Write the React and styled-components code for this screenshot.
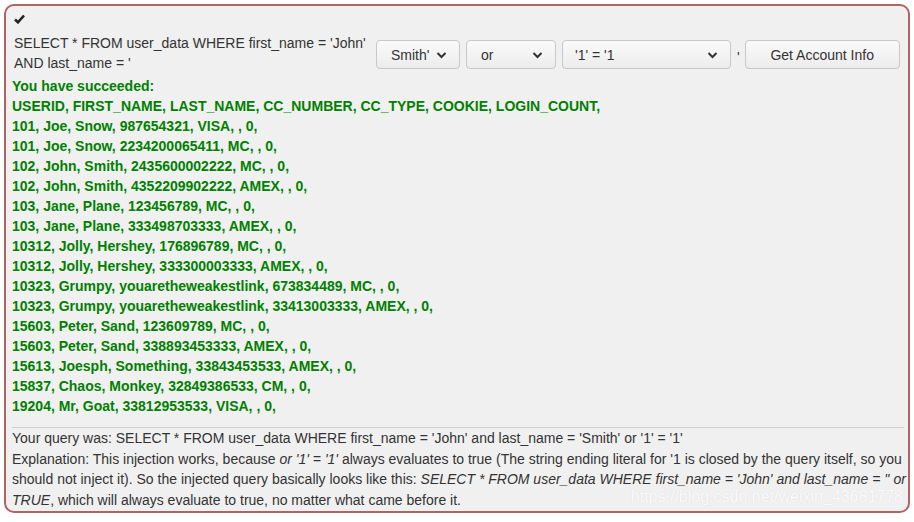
import React from 'react';
import styled, { createGlobalStyle } from 'styled-components';

const GlobalStyle = createGlobalStyle`
    body {
        margin: 0;
        background: #ffffff;
        font-family: "Liberation Sans", Arial, sans-serif;
    }
`;

const Page = styled.div`
    padding: 4px;
`;

const Panel = styled.div`
    position: relative;
    border: 2px solid #b06363;
    border-radius: 10px;
    background: #f0f0f0;
    padding: 5px 2px 7px 6px;
    height: 509px;
    box-sizing: border-box;
    font-size: 14px;
    color: #333;
`;

const CheckRow = styled.div`
    height: 16px;
    display: flex;
    align-items: center;
    padding-left: 2px;
`;

const QueryRow = styled.div`
    display: flex;
    align-items: center;
    margin-top: 6px;
`;

const QueryText = styled.div`
    width: 360px;
    line-height: 20px;
    padding-left: 2px;
`;

const Select = styled.div`
    display: flex;
    align-items: center;
    justify-content: space-between;
    box-sizing: border-box;
    width: ${(p) => p.w}px;
    height: 29px;
    margin: 3px 0 0 ${(p) => p.ml || 6}px;
    padding: 0 12px 0 ${(p) => p.pl || 12}px;
    border: 1px solid #c8c8c8;
    border-radius: 4px;
    background: linear-gradient(#fafafa, #ececec);
    color: #333;
`;

const Quote = styled.span`
    margin: 8px 5px 0 6px;
    line-height: 20px;
`;

const Button = styled.div`
    box-sizing: border-box;
    width: 155px;
    height: 29px;
    margin-top: 3px;
    display: flex;
    align-items: center;
    justify-content: center;
    border: 1px solid #c8c8c8;
    border-radius: 4px;
    background: linear-gradient(#fafafa, #ececec);
    color: #333;
`;

const Result = styled.div`
    margin-top: 3px;
    color: #008000;
    font-weight: bold;
    line-height: 20px;
`;

const Divider = styled.hr`
    border: 0;
    border-top: 1px solid #cfcfcf;
    margin: 11px 2px 0 0;
`;

const Feedback = styled.div`
    line-height: 20.6px;
`;

const Watermark = styled.div`
    position: absolute;
    right: 5px;
    bottom: 5px;
    font-size: 16px;
    color: #fafafa;
    text-shadow: 0 0 1px #d8d8d8;
`;

const Chevron = () => (
    <svg width="11" height="8" viewBox="0 0 11 8">
        <path d="M1.5 2 L5.5 6 L9.5 2" fill="none" stroke="#333" strokeWidth="2" />
    </svg>
);

const Check = () => (
    <svg width="11" height="10" viewBox="0 0 11 10">
        <path d="M1 5.5 L4 8.3 L10 1.5" fill="none" stroke="#222" strokeWidth="2.6" />
    </svg>
);

const rows = [
    'You have succeeded:',
    'USERID, FIRST_NAME, LAST_NAME, CC_NUMBER, CC_TYPE, COOKIE, LOGIN_COUNT,',
    '101, Joe, Snow, 987654321, VISA, , 0,',
    '101, Joe, Snow, 2234200065411, MC, , 0,',
    '102, John, Smith, 2435600002222, MC, , 0,',
    '102, John, Smith, 4352209902222, AMEX, , 0,',
    '103, Jane, Plane, 123456789, MC, , 0,',
    '103, Jane, Plane, 333498703333, AMEX, , 0,',
    '10312, Jolly, Hershey, 176896789, MC, , 0,',
    '10312, Jolly, Hershey, 333300003333, AMEX, , 0,',
    '10323, Grumpy, youaretheweakestlink, 673834489, MC, , 0,',
    '10323, Grumpy, youaretheweakestlink, 33413003333, AMEX, , 0,',
    '15603, Peter, Sand, 123609789, MC, , 0,',
    '15603, Peter, Sand, 338893453333, AMEX, , 0,',
    '15613, Joesph, Something, 33843453533, AMEX, , 0,',
    '15837, Chaos, Monkey, 32849386533, CM, , 0,',
    '19204, Mr, Goat, 33812953533, VISA, , 0,',
];

const App = () => {
    return (
        <Page>
            <GlobalStyle />
            <Panel>
                <CheckRow>
                    <Check />
                </CheckRow>
                <QueryRow>
                    <QueryText>
                        SELECT * FROM user_data WHERE first_name = 'John' AND last_name = '
                    </QueryText>
                    <Select w={84} ml={2} pl={14}>
                        Smith' <Chevron />
                    </Select>
                    <Select w={90} pl={14}>
                        or <Chevron />
                    </Select>
                    <Select w={169}>
                        '1' = '1 <Chevron />
                    </Select>
                    <Quote>'</Quote>
                    <Button>Get Account Info</Button>
                </QueryRow>
                <Result>
                    {rows.map((r) => (
                        <div key={r}>{r}</div>
                    ))}
                </Result>
                <Divider />
                <Feedback>
                    Your query was: SELECT * FROM user_data WHERE first_name = 'John' and
                    last_name = 'Smith' or '1' = '1'
                    <br />
                    Explanation: This injection works, because <i>or '1' = '1'</i> always
                    evaluates to true (The string ending literal for '1 is closed by the query
                    itself, so you should not inject it). So the injected query basically looks
                    like this: <i>SELECT * FROM user_data WHERE first_name = 'John' and
                    last_name = '' or TRUE</i>, which will always evaluate to true, no matter
                    what came before it.
                </Feedback>
                <Watermark>https://blog.csdn.net/weixin_43681778</Watermark>
            </Panel>
        </Page>
    );
};

export default App;
